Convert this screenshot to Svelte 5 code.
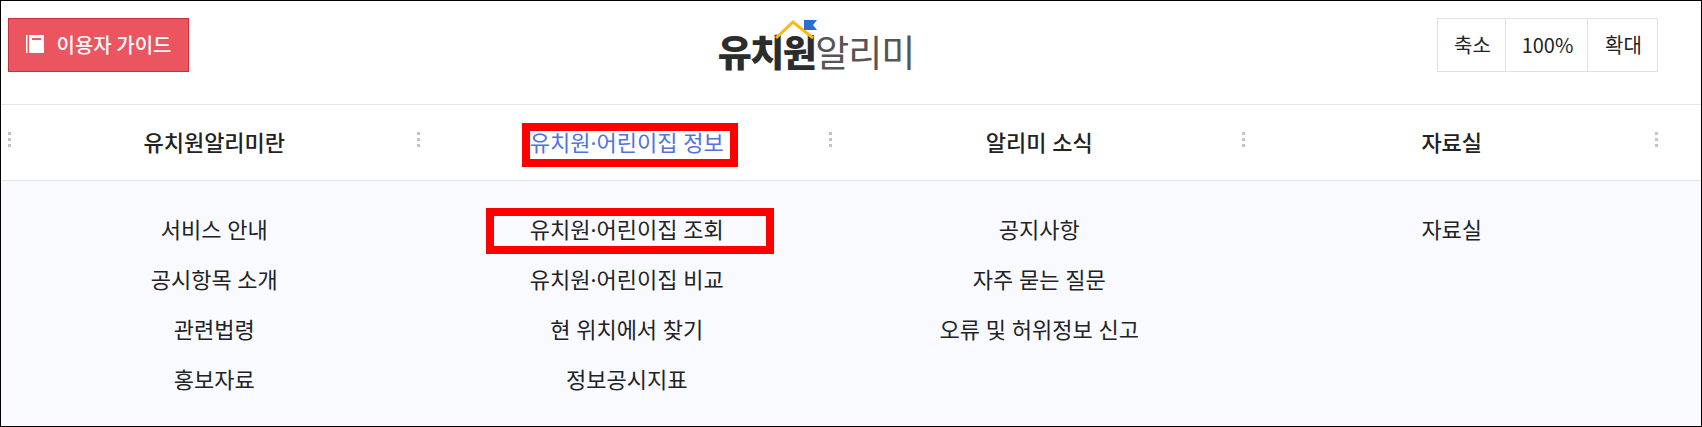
<script>
  const menus = [
    { title: "유치원알리미란", items: ["서비스 안내", "공시항목 소개", "관련법령", "홍보자료"] },
    { title: "유치원·어린이집 정보", active: true, items: ["유치원·어린이집 조회", "유치원·어린이집 비교", "현 위치에서 찾기", "정보공시지표"] },
    { title: "알리미 소식", items: ["공지사항", "자주 묻는 질문", "오류 및 허위정보 신고"] },
    { title: "자료실", items: ["자료실"] }
  ];
</script>

<div class="page">
  <header class="top">
    <div class="left">
      <button class="guide">
        <svg width="18" height="18" viewBox="0 0 18 18" aria-hidden="true">
          <rect x="0" y="0" width="1.500" height="18" fill="#fff" />
          <path d="M3 0h15v18H3z" fill="#fff" />
          <rect x="6" y="3" width="9" height="2" fill="#eb5560" />
        </svg>
        이용자 가이드
      </button>
    </div>
    <div class="logo">
      <svg class="roof" width="44" height="22" viewBox="0 0 44 22" aria-hidden="true">
        <path d="M2 18 L19 2 L39 18" fill="none" stroke="#fdb813" stroke-width="3" />
        <path d="M30 0h13l-4 5 4 5H30z" fill="#2a6fd0" />
      </svg>
      <span class="strong">유치원</span><span class="light">알리미</span>
    </div>
    <div class="right">
      <div class="zoom">
        <button class="small">축소</button>
        <button class="mid">100%</button>
        <button class="big">확대</button>
      </div>
    </div>
  </header>

  <nav class="gnb">
    {#each menus as m}
      <div class="tab">
        <i class="dots"></i>
        <span class:active={m.active}>{m.title}</span>
      </div>
    {/each}
    <i class="dots end"></i>
  </nav>

  <div class="panel">
    {#each menus as m}
      <ul>
        {#each m.items as item}
          <li>{item}</li>
        {/each}
      </ul>
    {/each}
  </div>

  <!-- red annotation boxes drawn over the screenshot -->
  <div class="mark one"></div>
  <div class="mark two"></div>
</div>

<style>
  :global(body) {
    margin: 0;
    background: #fff;
  }

  .page {
    position: relative;
    box-sizing: border-box;
    width: 1702px;
    height: 427px;
    border: 1px solid #000;
    font-family: "Noto Sans CJK KR", "Noto Sans", sans-serif;
    color: #222;
    background: #fff;
    overflow: hidden;
  }

  button {
    font: inherit;
    color: inherit;
    background: none;
    padding: 0;
    margin: 0;
    cursor: pointer;
  }

  .top {
    display: grid;
    grid-template-columns: 1fr auto 1fr;
    height: 103px;
    border-bottom: 1px solid #e6e6e6;
    box-sizing: content-box;
  }

  .left {
    padding: 17px 0 0 7px;
  }

  .guide {
    display: flex;
    align-items: center;
    justify-content: center;
    gap: 13px;
    width: 181px;
    height: 54px;
    padding-bottom: 2px;
    box-sizing: border-box;
    background: #eb5560;
    border: 1px solid #c8303c;
    color: #fff;
    font-size: 20px;
    font-weight: 500;
  }

  .logo {
    position: relative;
    display: flex;
    align-items: flex-end;
    height: 75px;
    font-size: 37px;
    line-height: 50px;
    letter-spacing: -1px;
    margin-right: 70px;
  }

  .logo .strong {
    font-weight: 900;
    color: #2c2c2c;
    letter-spacing: -1.500px;
  }

  .logo .light {
    font-weight: 400;
    color: #555;
  }

  .roof {
    position: absolute;
    left: 56px;
    top: 19px;
  }

  .right {
    display: flex;
    justify-content: flex-end;
    padding: 17px 43px 0 0;
  }

  .zoom {
    display: flex;
    height: 54px;
  }

  .zoom button {
    box-sizing: border-box;
    height: 54px;
    padding: 0 0 2px 2px;
    border: 1px solid #e0e0e0;
    font-size: 20px;
    background: #fff;
  }

  .small { width: 69px; }
  .mid { width: 83px; border-left-width: 2px; margin-left: -1px; }
  .big { width: 71px; margin-left: -1px; }

  .gnb {
    position: relative;
    display: grid;
    grid-template-columns: repeat(4, 412.500px);
    padding-left: 7px;
    height: 75px;
    border-bottom: 1px solid #e3e3e3;
  }

  .tab {
    position: relative;
    display: flex;
    align-items: center;
    justify-content: center;
    padding-bottom: 4px;
    font-family: "Noto Sans", "Noto Sans CJK KR", sans-serif;
    font-size: 22px;
    font-weight: 500;
  }

  .active {
    color: #5073e2;
    font-weight: 400;
  }

  .dots {
    position: absolute;
    left: 0;
    top: 27px;
    width: 3px;
    height: 15px;
    background: repeating-linear-gradient(#c4c4c4 0 3px, transparent 3px 6px);
  }

  .tab:not(:first-child) .dots {
    left: -4px;
  }

  .dots.end {
    left: 1654px;
  }

  .panel {
    display: grid;
    grid-template-columns: repeat(4, 412.500px);
    box-sizing: border-box;
    padding: 23px 0 0 7px;
    height: 245px;
    background: #f8faff;
  }

  ul {
    list-style: none;
    margin: 0;
    padding: 0;
    text-align: center;
    font-family: "Noto Sans", "Noto Sans CJK KR", sans-serif;
  }

  li {
    height: 50px;
    line-height: 50px;
    font-size: 22px;
  }

  .mark {
    position: absolute;
    box-sizing: border-box;
    border: 8px solid #f00;
  }

  .one {
    left: 521px;
    top: 122px;
    width: 216px;
    height: 44px;
  }

  .two {
    left: 485px;
    top: 207px;
    width: 288px;
    height: 46px;
  }
</style>
